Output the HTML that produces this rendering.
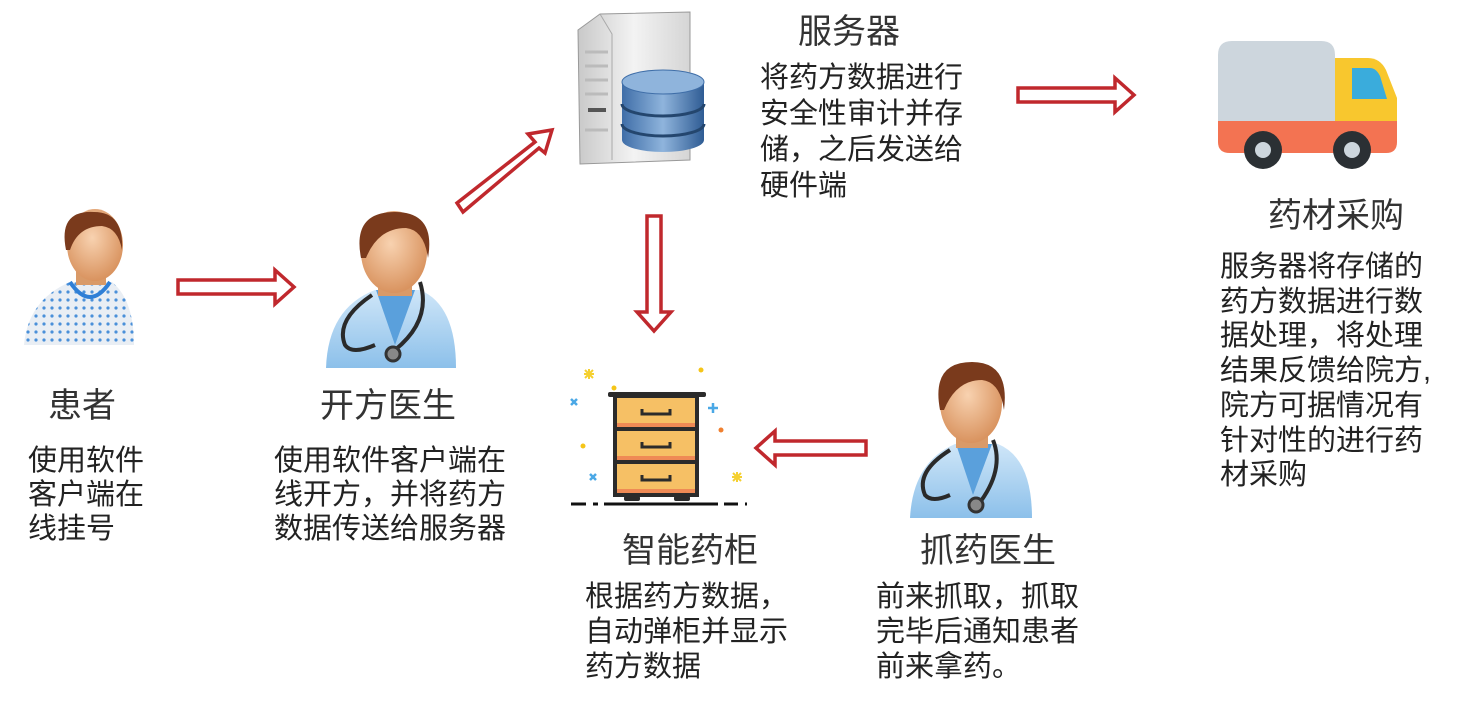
<!DOCTYPE html>
<html><head><meta charset="utf-8"><style>
body{margin:0;width:1472px;height:702px;background:#fff;position:relative;overflow:hidden;font-family:"Liberation Sans","Noto Sans CJK SC",sans-serif;color:#222}
.t{position:absolute;font-size:34px;color:#333;white-space:nowrap;line-height:40px}
.d{position:absolute;font-size:29px;white-space:nowrap;color:#222}
svg{position:absolute;left:0;top:0}
</style></head><body>
<svg width="1472" height="702">
<defs>
<radialGradient id="skin" cx="0.45" cy="0.4" r="0.6"><stop offset="0" stop-color="#f8d2b0"/><stop offset="1" stop-color="#d9935f"/></radialGradient>
<linearGradient id="coat" x1="0" y1="0" x2="0" y2="1"><stop offset="0" stop-color="#cfe6f8"/><stop offset="1" stop-color="#8cc0ea"/></linearGradient>
<linearGradient id="db" x1="0" y1="0" x2="1" y2="0"><stop offset="0" stop-color="#3f6ea8"/><stop offset=".5" stop-color="#8fb4dc"/><stop offset="1" stop-color="#2f5c94"/></linearGradient>
<linearGradient id="srv" x1="0" y1="0" x2="1" y2="0"><stop offset="0" stop-color="#c9c9c9"/><stop offset=".5" stop-color="#f3f3f3"/><stop offset="1" stop-color="#d5d5d5"/></linearGradient>
<pattern id="dots" width="8" height="8" patternUnits="userSpaceOnUse"><rect width="8" height="8" fill="#e9eef4"/><circle cx="4" cy="4" r="1.6" fill="#4a90d9"/></pattern>
</defs>
<g fill="#fff" stroke="#c0282d" stroke-width="3.5">
<polygon points="178,280 275,280 275,270 294,287 275,304 275,294 178,294"/>
<polygon points="1018,88 1115,88 1115,78 1134,95 1115,112 1115,102 1018,102"/>
<polygon points="866,441 775,441 775,431 756,448 775,465 775,455 866,455"/>
<polygon points="647,216 661,216 661,312 671,312 654,331 637,312 647,312"/>
<polygon points="457,203 535,142 528,134 552,130 545,153 539,148 463,212"/>
</g>
<!-- patient -->
<g>
<path d="M24 345 Q28 300 70 282 L112 282 Q134 300 134 345 Z" fill="url(#dots)"/>
<path d="M70 282 Q90 312 110 282" fill="none" stroke="#2f7fd6" stroke-width="4"/>
<rect x="76" y="260" width="30" height="25" fill="#d99a68"/>
<ellipse cx="95" cy="245" rx="28" ry="36" fill="url(#skin)"/>
<path d="M66 250 Q58 210 94 212 Q124 212 122 250 Q118 228 102 226 Q78 226 70 250 Z" fill="#7a3a1c"/>
</g>
<!-- doctor 1 -->
<g>
<path d="M326 368 Q328 308 375 290 L420 290 Q456 305 456 368 Z" fill="url(#coat)"/>
<path d="M376 290 L395 345 L415 290 Z" fill="#5aa0dc"/>
<rect x="378" y="268" width="34" height="28" fill="#d99a68"/>
<ellipse cx="394" cy="252" rx="33" ry="41" fill="url(#skin)"/>
<path d="M361 258 Q352 212 395 212 Q436 212 428 258 Q424 230 406 228 Q378 228 366 258 Z" fill="#7a3a1c"/>
<path d="M372 295 Q335 320 345 345 Q352 355 375 345 M420 282 Q432 320 395 350" fill="none" stroke="#2a2a2a" stroke-width="4"/>
<circle cx="393" cy="354" r="7" fill="#888" stroke="#333" stroke-width="3"/>
</g>
<!-- doctor 2 -->
<g>
<path d="M910 518 Q913 462 955 444 L998 444 Q1032 458 1032 518 Z" fill="url(#coat)"/>
<path d="M956 444 L973 495 L992 444 Z" fill="#5aa0dc"/>
<rect x="956" y="420" width="32" height="28" fill="#d99a68"/>
<ellipse cx="971" cy="403" rx="31" ry="40" fill="url(#skin)"/>
<path d="M940 410 Q931 362 972 362 Q1010 362 1004 410 Q1000 382 982 380 Q956 380 944 410 Z" fill="#7a3a1c"/>
<path d="M950 450 Q915 472 925 495 Q932 503 950 495 M993 440 Q1005 470 978 505" fill="none" stroke="#2a2a2a" stroke-width="4"/>
<circle cx="976" cy="505" r="7" fill="#888" stroke="#333" stroke-width="3"/>
</g>
<!-- server -->
<g>
<path d="M578 30 L600 14 L690 12 L690 160 L580 164 Z" fill="url(#srv)" stroke="#999" stroke-width="1"/>
<path d="M600 14 L612 34 L612 160" fill="none" stroke="#aaa"/>
<g stroke="#bbb" stroke-width="3"><line x1="585" y1="52" x2="608" y2="52"/><line x1="585" y1="66" x2="608" y2="66"/><line x1="585" y1="80" x2="608" y2="80"/><line x1="585" y1="94" x2="608" y2="94"/><line x1="585" y1="130" x2="608" y2="130"/></g>
<rect x="588" y="108" width="18" height="4" fill="#555"/>
<path d="M622 82 L622 140 A41 12 0 0 0 704 140 L704 82 Z" fill="url(#db)"/>
<ellipse cx="663" cy="82" rx="41" ry="12" fill="#8fb4dc" stroke="#3f6ea8"/>
<path d="M622 104 A41 12 0 0 0 704 104 M622 124 A41 12 0 0 0 704 124" fill="none" stroke="#24466e" stroke-width="3"/>
</g>
<!-- truck -->
<g>
<path d="M1218 55 Q1218 41 1232 41 L1321 41 Q1335 41 1335 55 L1335 121 L1218 121 Z" fill="#cdd6dd"/>
<path d="M1335 58 L1368 58 Q1380 58 1386 70 L1397 98 L1397 121 L1335 121 Z" fill="#f8c72e"/>
<path d="M1352 68 L1370 68 Q1376 68 1380 76 L1387 99 L1352 99 Z" fill="#3aacdc"/>
<path d="M1218 121 L1397 121 L1397 142 Q1397 153 1386 153 L1230 153 Q1218 153 1218 142 Z" fill="#f37352"/>
<circle cx="1263" cy="150" r="19" fill="#2b3034"/><circle cx="1263" cy="150" r="8" fill="#cdd6dd"/>
<circle cx="1352" cy="150" r="19" fill="#2b3034"/><circle cx="1352" cy="150" r="8" fill="#cdd6dd"/>
</g>
<!-- cabinet -->
<g>
<rect x="608" y="392" width="98" height="5" rx="2" fill="#2b2b2b"/>
<rect x="613" y="396" width="86" height="101" fill="#2b2b2b"/>
<g fill="#f6c065"><rect x="617" y="398" width="78" height="28"/><rect x="617" y="431" width="78" height="28"/><rect x="617" y="464" width="78" height="29"/></g>
<g fill="#ef8a55"><rect x="617" y="423" width="78" height="4"/><rect x="617" y="456" width="78" height="4"/><rect x="617" y="489" width="78" height="4"/></g>
<g fill="none" stroke="#2b2b2b" stroke-width="3"><path d="M642 409 v5 h28 v-5"/><path d="M642 442 v5 h28 v-5"/><path d="M642 475 v5 h28 v-5"/></g>
<rect x="624" y="496" width="16" height="5" rx="2" fill="#2b2b2b"/><rect x="674" y="496" width="16" height="5" rx="2" fill="#2b2b2b"/>
<g stroke="#111" stroke-width="3"><line x1="571" y1="504" x2="586" y2="504"/><line x1="593" y1="504" x2="598" y2="504"/><line x1="604" y1="504" x2="718" y2="504"/><line x1="724" y1="504" x2="738" y2="504"/><line x1="745" y1="504" x2="747" y2="504"/></g>
<g fill="#f5c518"><circle cx="701" cy="370" r="2.5"/><circle cx="614" cy="388" r="2.5"/><circle cx="583" cy="446" r="2.5"/></g>
<circle cx="721" cy="430" r="2.5" fill="#f08030"/>
<g stroke="#4aa8e6" stroke-width="2.5"><path d="M571 399 l6 6 M577 399 l-6 6 M590 474 l6 6 M596 474 l-6 6 M713 403 v10 M708 408 h10"/></g>
<g stroke="#f5d030" stroke-width="2"><path d="M589 369 v10 M584 374 h10 M585 370 l8 8 M593 370 l-8 8 M737 472 v10 M732 477 h10 M733 473 l8 8 M741 473 l-8 8"/></g>
</g>
</svg>

<div class="t" style="left:48px;top:386px">患者</div>
<div class="d" style="left:28px;top:444px;line-height:34px">使用软件<br>客户端在<br>线挂号</div>
<div class="t" style="left:320px;top:386px">开方医生</div>
<div class="d" style="left:274px;top:444px;line-height:34px">使用软件客户端在<br>线开方，并将药方<br>数据传送给服务器</div>
<div class="t" style="left:798px;top:12px">服务器</div>
<div class="d" style="left:760px;top:60px;line-height:36px">将药方数据进行<br>安全性审计并存<br>储，之后发送给<br>硬件端</div>
<div class="t" style="left:1268px;top:196px">药材采购</div>
<div class="d" style="left:1220px;top:250px;line-height:34.7px">服务器将存储的<br>药方数据进行数<br>据处理，将处理<br>结果反馈给院方,<br>院方可据情况有<br>针对性的进行药<br>材采购</div>
<div class="t" style="left:622px;top:531px">智能药柜</div>
<div class="d" style="left:585px;top:580px;line-height:35px">根据药方数据，<br>自动弹柜并显示<br>药方数据</div>
<div class="t" style="left:920px;top:531px">抓药医生</div>
<div class="d" style="left:876px;top:580px;line-height:35px">前来抓取，抓取<br>完毕后通知患者<br>前来拿药。</div>
</body></html>
